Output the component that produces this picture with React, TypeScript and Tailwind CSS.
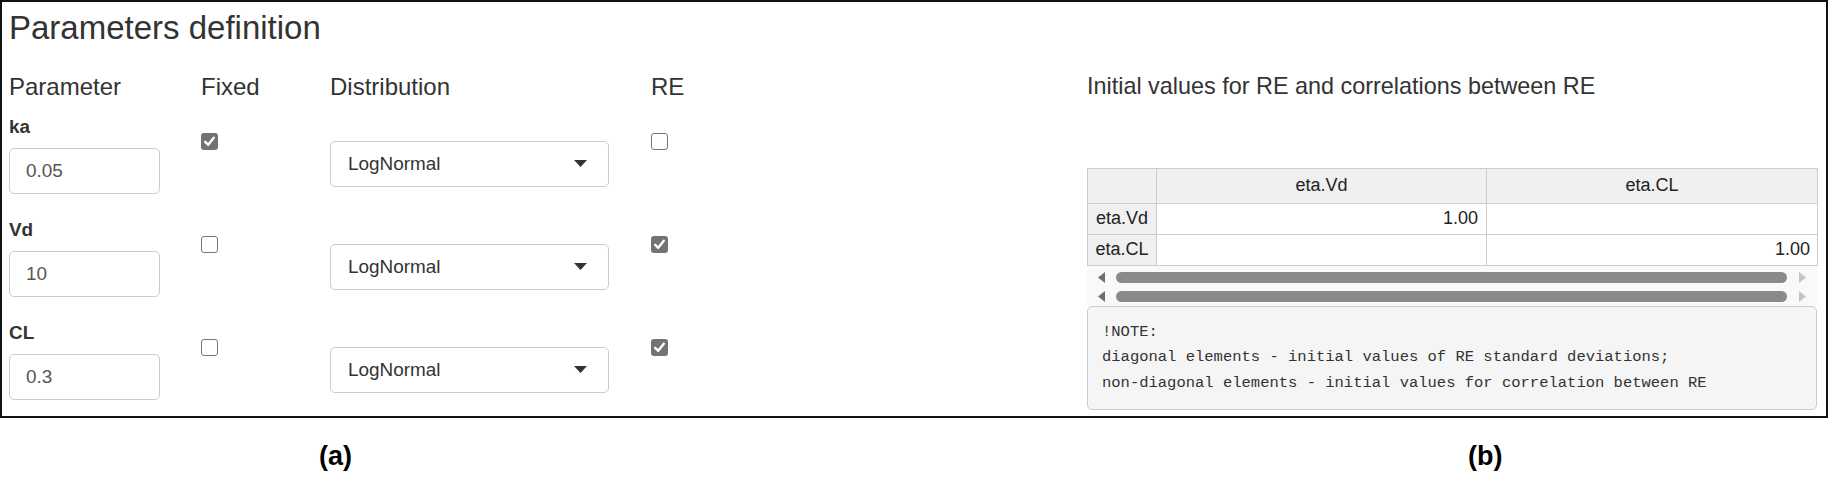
import React from "react";

const sans = { fontFamily: '"Liberation Sans", Arial, sans-serif' };

function CheckBox({ checked }: { checked: boolean }) {
  if (checked) {
    return (
      <div className="w-[17px] h-[17px] rounded-[3px] bg-[#737373] flex items-center justify-center">
        <svg width="13" height="13" viewBox="0 0 13 13">
          <path d="M2.2 6.8 L5.2 9.8 L10.8 2.8" fill="none" stroke="#fff" strokeWidth="2.4" strokeLinecap="round" strokeLinejoin="round" />
        </svg>
      </div>
    );
  }
  return <div className="w-[17px] h-[17px] rounded-[3px] border border-[#767676] bg-white" />;
}

function Select() {
  return (
    <div className="w-[279px] h-[46px] rounded-[5px] border border-[#cccccc] bg-white flex items-center justify-between pl-[17px] pr-[21px]">
      <span className="text-[18.9px] text-[#333]">LogNormal</span>
      <svg width="13" height="7" viewBox="0 0 13 7">
        <path d="M0 0 L13 0 L6.5 7 Z" fill="#333" />
      </svg>
    </div>
  );
}

const params = [
  { name: "ka", value: "0.05", fixed: true, re: false },
  { name: "Vd", value: "10", fixed: false, re: true },
  { name: "CL", value: "0.3", fixed: false, re: true },
];

function LeftArrow({ color }: { color: string }) {
  return (
    <svg width="7" height="11" viewBox="0 0 7 11">
      <path d="M7 0 L0 5.5 L7 11 Z" fill={color} />
    </svg>
  );
}
function RightArrow({ color }: { color: string }) {
  return (
    <svg width="7" height="11" viewBox="0 0 7 11">
      <path d="M0 0 L7 5.5 L0 11 Z" fill={color} />
    </svg>
  );
}

function ScrollRow() {
  return (
    <div className="h-[19px] flex items-center">
      <div className="w-[11px]" />
      <LeftArrow color="#6f6f6f" />
      <div className="w-[11px]" />
      <div className="w-[671px] h-[11px] rounded-full bg-[#8a8a8a]" />
      <div className="w-[12px]" />
      <RightArrow color="#c4c4c4" />
    </div>
  );
}

export default function App() {
  return (
    <div className="w-[1833px] h-[485px] bg-white text-[#333]" style={sans}>
      <div className="w-[1828px] h-[418px] border-2 border-[#111] flex">
        {/* Left panel */}
        <div className="w-[1085px] pl-[7px] pt-[8px]">
          <div className="text-[33px] leading-[1.1] text-[#333]">Parameters definition</div>
          <div className="mt-[28px] grid grid-cols-[192px_129px_321px_auto] text-[24px] leading-[1.1] text-[#333]">
            <div>Parameter</div>
            <div>Fixed</div>
            <div>Distribution</div>
            <div>RE</div>
          </div>
          <div className="mt-[12px]">
            {params.map((p) => (
              <div key={p.name} className="h-[103px] grid grid-cols-[192px_129px_321px_auto]">
                <div>
                  <div className="text-[18.9px] leading-[27px] font-bold text-[#333] mb-[8px]">{p.name}</div>
                  <div className="w-[151px] h-[46px] rounded-[5px] border border-[#cccccc] bg-white flex items-center pl-[16px]">
                    <span className="text-[18.9px] text-[#555]">{p.value}</span>
                  </div>
                </div>
                <div className="pt-[20px]">
                  <CheckBox checked={p.fixed} />
                </div>
                <div className="pt-[28px]">
                  <Select />
                </div>
                <div className="pt-[20px]">
                  <CheckBox checked={p.re} />
                </div>
              </div>
            ))}
          </div>
        </div>
        {/* Right panel */}
        <div className="w-[730px] pt-[72px]">
          <div className="text-[23.4px] leading-[1.1] text-[#333]">Initial values for RE and correlations between RE</div>
          <div className="mt-[68px]">
            <table className="border-collapse table-fixed w-[730px] text-[18px] text-[#222]">
              <colgroup>
                <col className="w-[69px]" />
                <col className="w-[330px]" />
                <col className="w-[331px]" />
              </colgroup>
              <tbody>
                <tr className="h-[35px]">
                  <td className="border border-[#cccccc] bg-[#f0f0f0]"></td>
                  <td className="border border-[#cccccc] bg-[#f0f0f0] text-center">eta.Vd</td>
                  <td className="border border-[#cccccc] bg-[#f0f0f0] text-center">eta.CL</td>
                </tr>
                <tr className="h-[31px]">
                  <td className="border border-[#cccccc] bg-[#f0f0f0] text-center">eta.Vd</td>
                  <td className="border border-[#cccccc] bg-white text-right pr-[8px]">1.00</td>
                  <td className="border border-[#cccccc] bg-white"></td>
                </tr>
                <tr className="h-[31px]">
                  <td className="border border-[#cccccc] bg-[#f0f0f0] text-center">eta.CL</td>
                  <td className="border border-[#cccccc] bg-white"></td>
                  <td className="border border-[#cccccc] bg-white text-right pr-[7px]">1.00</td>
                </tr>
              </tbody>
            </table>
          </div>
          <div className="h-[40px] pt-[2px] bg-[#f9f9f9]">
            <ScrollRow />
            <ScrollRow />
          </div>
          <div
            className="h-[104px] rounded-[5px] border border-[#cccccc] bg-[#f5f5f5] pl-[14px] pt-[13px] text-[15.5px] leading-[25.5px] text-[#333]"
            style={{ fontFamily: '"Liberation Mono", "DejaVu Sans Mono", monospace' }}
          >
            <div>!NOTE:</div>
            <div>diagonal elements - initial values of RE standard deviations;</div>
            <div>non-diagonal elements - initial values for correlation between RE</div>
          </div>
        </div>
      </div>
      <div className="flex pt-[25px]">
        <div className="w-[671px] text-center text-[27px] leading-none font-bold text-black">(a)</div>
        <div className="ml-[797px] text-[27px] leading-none font-bold text-black">(b)</div>
      </div>
    </div>
  );
}
